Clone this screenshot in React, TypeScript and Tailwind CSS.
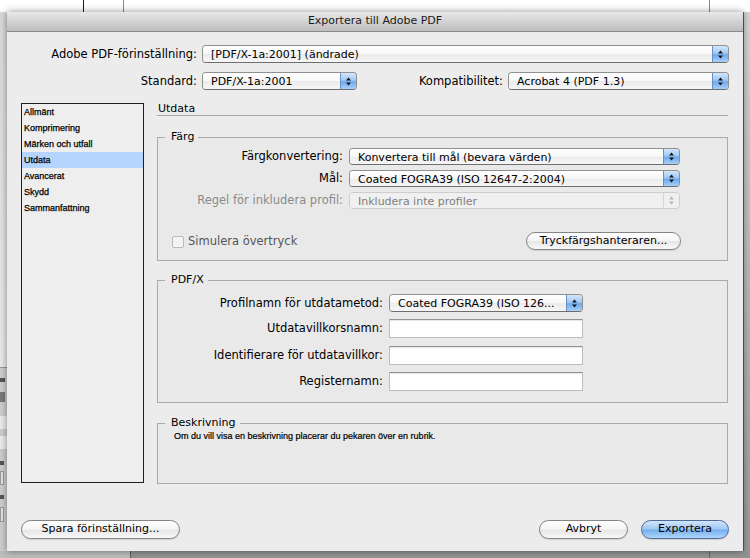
import clsx from 'clsx';

const sections = [
  'Allmänt',
  'Komprimering',
  'Märken och utfall',
  'Utdata',
  'Avancerat',
  'Skydd',
  'Sammanfattning',
];

function Arrows({ disabled }: { disabled?: boolean }) {
  const c = disabled ? '#b8b8b8' : '#161616';
  return (
    <svg width="5" height="9" viewBox="0 0 5 9">
      <path d="M0 3.5 L2.5 0.5 L5 3.5 Z" fill={c} />
      <path d="M0 5.5 L2.5 8.5 L5 5.5 Z" fill={c} />
    </svg>
  );
}

function Label({
  children,
  className,
  muted,
}: {
  children: React.ReactNode;
  className?: string;
  muted?: boolean;
}) {
  return (
    <div className={clsx('pt-px text-right text-[11.5px]', muted ? 'text-[#8a8a8a]' : 'text-black', className)}>
      {children}
    </div>
  );
}

function Popup({
  value,
  className,
  disabled,
}: {
  value: string;
  className?: string;
  disabled?: boolean;
}) {
  return (
    <div
      className={clsx(
        'flex overflow-hidden rounded-[4px] border',
        disabled ? 'border-[#cdcdcd]' : 'border-[#909090] border-b-[#6e6e6e]',
        className,
      )}
    >
      <div
        className={clsx(
          'min-w-0 flex-1 truncate pl-[8px] pt-px text-[11px] leading-[15px]',
          disabled
            ? 'bg-[#f0f0f0] text-[#7e7e7e]'
            : 'bg-[linear-gradient(to_bottom,#ffffff_0%,#f7f7f7_50%,#ebebeb_51%,#f6f6f6_100%)] text-black',
        )}
      >
        {value}
      </div>
      <div
        className={clsx(
          'flex w-[16px] shrink-0 items-center justify-center border-l',
          disabled
            ? 'border-[#d6d6d6] bg-[#f0f0f0]'
            : 'border-[#6a8fc4] bg-[linear-gradient(to_bottom,#d3e6fc_0%,#a0c8f4_45%,#6caaef_55%,#a8cff8_100%)]',
        )}
      >
        <Arrows disabled={disabled} />
      </div>
    </div>
  );
}

function Button({
  children,
  className,
  primary,
}: {
  children: React.ReactNode;
  className?: string;
  primary?: boolean;
}) {
  return (
    <div
      className={clsx(
        'flex items-center justify-center rounded-full border text-[11px] shadow-[0_1px_1px_rgba(0,0,0,0.12)]',
        primary
          ? 'border-[#4d6c9c] bg-[linear-gradient(to_bottom,#d2e5fb_0%,#9fc8f3_48%,#74aeee_52%,#b0d6fb_100%)]'
          : 'border-[#858585] bg-[linear-gradient(to_bottom,#ffffff_0%,#f5f5f5_48%,#e6e6e6_52%,#f8f8f8_100%)]',
        className,
      )}
    >
      {children}
    </div>
  );
}

function TextField() {
  return (
    <div className="h-[19px] w-[194px] border border-[#bdbdbd] border-t-[#929292] bg-white shadow-[inset_0_1px_1px_rgba(0,0,0,0.1)]" />
  );
}

function Group({ title, children }: { title: string; children: React.ReactNode }) {
  return (
    <fieldset className="border border-[#aaaaaa] bg-[#e9e9e9]">
      <legend className="ml-[7px] pl-[6px] pr-[4px] text-[11px] leading-[14px]">{title}</legend>
      {children}
    </fieldset>
  );
}

function LeftStrip() {
  // bit of the application window behind the dialog
  return (
    <div className="flex w-[7px] shrink-0 flex-col">
      <div className="h-[355px] bg-[linear-gradient(to_bottom,#d9d9d9,#e9e9e9)]" />
      <div className="flex flex-1 flex-col border-t border-[#9a9a9a] bg-[#cdcdcd]">
        <div className="mt-[10px] h-[4px] w-[5px] bg-[#555]" />
        <div className="mt-[10px] h-[10px] w-[5px] bg-[#7a7a7a]" />
        <div className="mt-[14px] h-[13px] bg-[#ebebeb]" />
        <div className="mt-[7px] h-[13px] bg-[#ebebeb]" />
        <div className="mt-[12px] h-[4px] w-[4px] bg-[#555]" />
        <div className="mt-[6px] h-[14px] w-[4px] border border-[#9a9a9a] bg-[#e4e4e4]" />
        <div className="mt-[10px] h-[4px] w-[4px] bg-[#555]" />
        <div className="mt-[8px] h-[15px] w-[4px] border border-[#9a9a9a] bg-[#e4e4e4]" />
      </div>
    </div>
  );
}

function Dialog() {
  return (
    <div className="relative z-10 flex w-[736px] shrink-0 flex-col bg-[#ececec] shadow-[0_0_7px_rgba(0,0,0,0.45)]">
      {/* Title bar */}
      <div className="flex h-[20px] shrink-0 items-center justify-center border-b border-[#8a8a8a] bg-[linear-gradient(to_bottom,#e9e9e9,#bdbdbd)] text-[11px] text-[#1a1a1a]">
        Exportera till Adobe PDF
      </div>

      <div className="flex flex-1 flex-col px-[14px] pb-[12px] pt-[13px] text-[11px]">
        {/* Preset */}
        <div className="flex h-[18px] items-center">
          <Label className="w-[181px] pr-[5px]">Adobe PDF-förinställning:</Label>
          <Popup value="[PDF/X-1a:2001] (ändrade)" className="h-[18px] flex-1" />
        </div>

        {/* Standard / compatibility */}
        <div className="mt-[9px] flex h-[18px] items-center">
          <Label className="w-[181px] pr-[5px]">Standard:</Label>
          <Popup value="PDF/X-1a:2001" className="h-[18px] w-[155px]" />
          <Label className="flex-1 pr-[5px]">Kompatibilitet:</Label>
          <Popup value="Acrobat 4 (PDF 1.3)" className="h-[18px] w-[221px]" />
        </div>

        <div className="mt-[13px] flex h-[380px]">
          {/* Section list */}
          <div className="w-[123px] shrink-0 border border-[#1e1e1e] bg-[#eeeeee] font-['Liberation_Sans',Arial,sans-serif] text-[9px] [-webkit-text-stroke:0.25px_#000]">
            {sections.map((s) => (
              <div
                key={s}
                className={clsx('h-[16px] pl-[2px] leading-[16px]', s === 'Utdata' && 'bg-[#b5d5ff]')}
              >
                {s}
              </div>
            ))}
          </div>

          {/* Output panel */}
          <div className="ml-[13px] flex w-[571px] flex-col">
            <div className="h-[13px] border-b border-[#a9a9a9] pl-[1px] leading-[12px]">Utdata</div>

            <div className="mt-[14px]">
              <Group title="Färg">
                <div className="flex flex-col pb-[10px] pt-[4px]">
                  <div className="flex h-[17px] items-center">
                    <Label className="w-[191px] pr-[6px]">Färgkonvertering:</Label>
                    <Popup value="Konvertera till mål (bevara värden)" className="h-[17px] w-[331px]" />
                  </div>
                  <div className="mt-[5px] flex h-[17px] items-center">
                    <Label className="w-[191px] pr-[6px]">Mål:</Label>
                    <Popup value="Coated FOGRA39 (ISO 12647-2:2004)" className="h-[17px] w-[331px]" />
                  </div>
                  <div className="mt-[5px] flex h-[17px] items-center">
                    <Label muted className="w-[191px] pr-[6px]">
                      Regel för inkludera profil:
                    </Label>
                    <Popup value="Inkludera inte profiler" disabled className="h-[17px] w-[331px]" />
                  </div>
                  <div className="mt-[23px] flex h-[18px] items-center pl-[14px] pr-[46px]">
                    <div className="mt-[2px] h-[12px] w-[12px] rounded-[2px] border border-[#bababa] bg-[#f3f3f3]" />
                    <div className="ml-[4px] pt-[2px] text-[11.5px] text-[#555555]">Simulera övertryck</div>
                    <div className="flex-1" />
                    <Button className="h-[18px] w-[155px]">Tryckfärgshanteraren...</Button>
                  </div>
                </div>
              </Group>
            </div>

            <div className="mt-[12px]">
              <Group title="PDF/X">
                <div className="flex flex-col pb-[11px] pt-[7px]">
                  <div className="flex h-[18px] items-center">
                    <Label className="w-[231px] pr-[6px]">Profilnamn för utdatametod:</Label>
                    <Popup value="Coated FOGRA39 (ISO 126..." className="h-[18px] w-[194px]" />
                  </div>
                  <div className="mt-[7px] flex items-center">
                    <Label className="w-[231px] pr-[6px]">Utdatavillkorsnamn:</Label>
                    <TextField />
                  </div>
                  <div className="mt-[8px] flex items-center">
                    <Label className="w-[231px] pr-[6px]">Identifierare för utdatavillkor:</Label>
                    <TextField />
                  </div>
                  <div className="mt-[7px] flex items-center">
                    <Label className="w-[231px] pr-[6px]">Registernamn:</Label>
                    <TextField />
                  </div>
                </div>
              </Group>
            </div>

            <div className="mt-[13px]">
              <Group title="Beskrivning">
                <div className="h-[53px] pl-[16px] pt-[1px] font-['Liberation_Sans',Arial,sans-serif] text-[9px] leading-[10px] [-webkit-text-stroke:0.2px_#000]">
                  Om du vill visa en beskrivning placerar du pekaren över en rubrik.
                </div>
              </Group>
            </div>
          </div>
        </div>

        {/* Footer buttons */}
        <div className="mt-auto flex h-[19px] items-center">
          <Button className="h-[19px] w-[159px]">Spara förinställning...</Button>
          <div className="flex-1" />
          <Button className="h-[19px] w-[89px]">Avbryt</Button>
          <Button primary className="ml-[13px] h-[19px] w-[88px]">
            Exportera
          </Button>
        </div>
      </div>
    </div>
  );
}

export default function App() {
  return (
    <div className="flex h-[558px] w-[750px] flex-col overflow-hidden bg-white font-['DejaVu_Sans',sans-serif] text-black">
      {/* desktop strip above the dialog */}
      <div className="relative h-[12px] shrink-0 bg-white">
        <div className="absolute left-[83px] top-0 h-full w-px bg-[#1a1a1a]" />
        <div className="absolute left-[123px] top-0 h-full w-px bg-[#9d6bdc]" />
        <div className="absolute left-[709px] top-0 h-full w-px bg-[#9d6bdc]" />
      </div>

      <div className="flex h-[539px] shrink-0">
        <LeftStrip />
        <Dialog />
        <div className="w-[7px] shrink-0 border-l border-[#5e5e5e] bg-[linear-gradient(to_bottom,#d4d4d4,#999999)]" />
      </div>

      <div className="relative flex h-[7px] shrink-0">
        <div className="w-[130px] bg-[#bdbdbd]" />
        <div className="w-px bg-[#5c5c5c]" />
        <div className="flex-1 bg-[#939393]" />
        <div className="absolute left-[709px] top-0 h-full w-px bg-[#7d4fc0]" />
      </div>
    </div>
  );
}
